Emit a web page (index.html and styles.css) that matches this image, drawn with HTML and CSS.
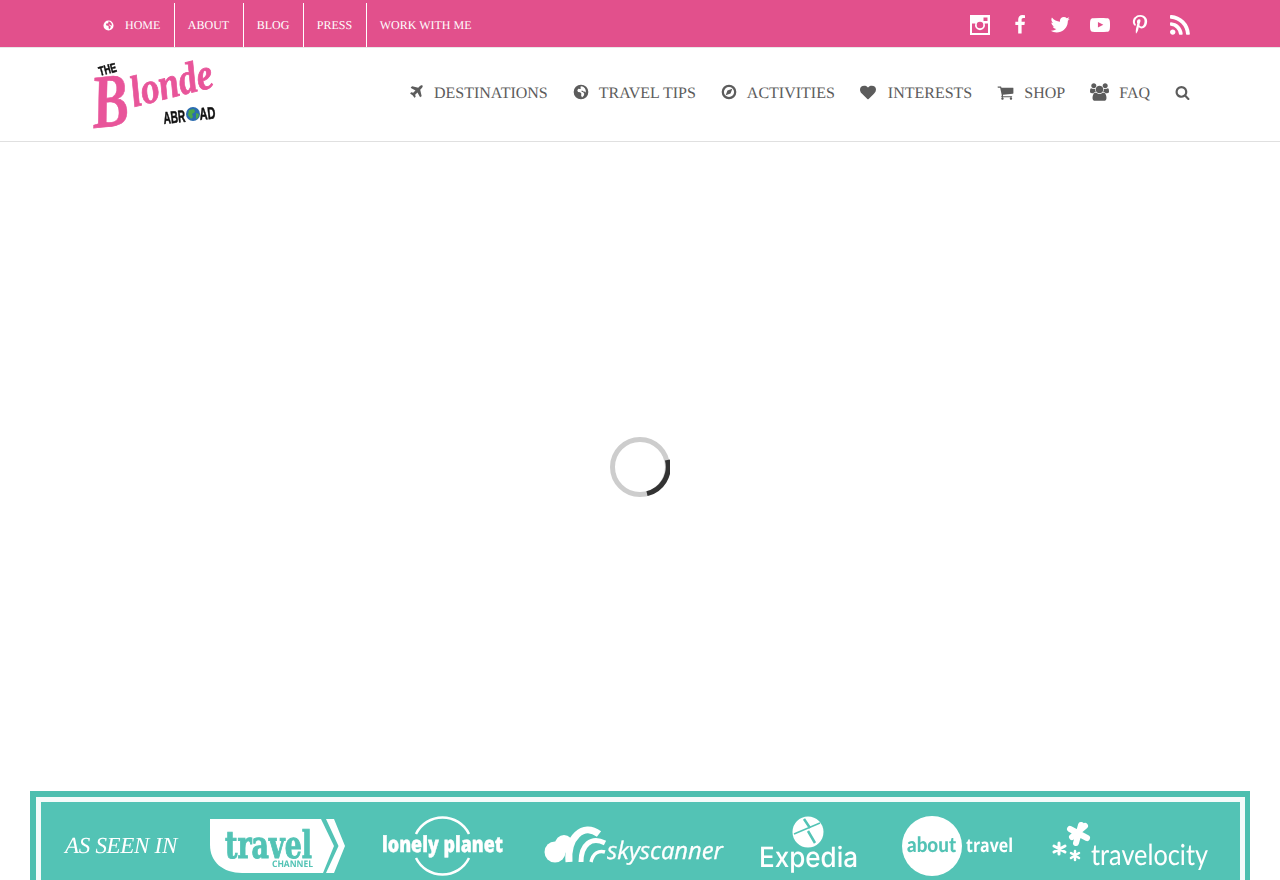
FILE: index.html
```html
<!DOCTYPE html>
<html lang="en">
<head>
<meta charset="utf-8">
<title>The Blonde Abroad</title>
<link rel="stylesheet" href="styles.css">
</head>
<body>
<svg class="sprite" width="0" height="0" aria-hidden="true">
  <symbol id="i-globe" viewBox="0 0 24 24"><path fill-rule="evenodd" d="M12 1a11 11 0 1 1 0 22 11 11 0 0 1 0-22zM13 3.200l-2.500 1.300 1.800 1.600-1.600 1.500-2.700-.4-1.500 2 1 2.700 3.200.6 1.800 1.700-.3 3.200 1.300 3 2.600-2.700.9-3-1.800-2.500-2.200-.4-.6-1.500 2.100-.3 1.900 1.500 1.700-.2.200 1.700 1-1.200c.3-4-2.500-7.200-6-8.400z"/></symbol>
  <symbol id="i-plane" viewBox="0 0 1408 1792"><path d="M1376 160q44 52 12 148t-108 172l-161 161 160 696q5 19-12 33l-128 96q-7 6-19 6-4 0-7-1-15-3-21-16l-279-508-259 259 53 194q5 17-8 31l-96 96q-9 9-23 9h-2q-15-2-24-13l-189-252-252-189q-11-7-13-23-1-13 9-25l96-97q9-9 23-9 6 0 8 1l194 53 259-259-508-279q-14-8-17-24-2-16 9-27l128-128q14-13 30-8l665 159 160-160q76-76 172-108t148 12z"/></symbol>
  <symbol id="i-compass" viewBox="0 0 24 24"><path fill-rule="evenodd" d="M12 1a11 11 0 1 1 0 22 11 11 0 0 1 0-22zm0 3.400a7.600 7.600 0 1 0 0 15.200 7.600 7.600 0 0 0 0-15.200zM17 7l-2.700 7.300L7 17l2.700-7.300z"/></symbol>
  <symbol id="i-heart" viewBox="0 0 1792 1792"><path d="M896 1664q-26 0-44-18l-624-602q-10-8-27.500-26t-55.500-65.500-68-97.500-53.500-121-23.500-138q0-220 127-344t351-124q62 0 126.500 21.500t120 58 95.500 68.500 76 68q36-36 76-68t95.500-68.500 120-58 126.500-21.500q224 0 351 124t127 344q0 221-229 450l-623 600q-18 18-44 18z"/></symbol>
  <symbol id="i-cart" viewBox="0 0 1792 1792"><path d="M704 1536q0 52-38 90t-90 38-90-38-38-90 38-90 90-38 90 38 38 90zm896 0q0 52-38 90t-90 38-90-38-38-90 38-90 90-38 90 38 38 90zm128-1088v512q0 24-16.500 42.500t-40.500 21.500l-1044 122q13 60 13 70 0 16-24 64h920q26 0 45 19t19 45-19 45-45 19h-1024q-26 0-45-19t-19-45q0-11 8-31.500t16-36 21.500-40 15.500-29.500l-177-823h-204q-26 0-45-19t-19-45 19-45 45-19h256q16 0 28.500 6.500t19.500 15.500 13 24.500 8 26 5.500 29.500 4.500 26h1201q26 0 45 19t19 45z"/></symbol>
  <symbol id="i-users" viewBox="0 0 1920 1792"><path d="M593 896q-162 5-265 128h-134q-82 0-138-40.500t-56-118.500q0-353 124-353 6 0 43.500 21t97.500 42.500 119 21.500q67 0 133-23-5 37-5 66 0 139 81 256zm1071 637q0 120-73 189.500t-194 69.500h-874q-121 0-194-69.500t-73-189.500q0-53 3.500-103.500t14-109 26.500-108.500 43-97.500 62-81 85.500-53.500 111.500-20q10 0 43 21.500t73 48 107 48 135 21.500 135-21.500 107-48 73-48 43-21.500q61 0 111.500 20t85.500 53.500 62 81 43 97.500 26.500 108.500 14 109 3.500 103.500zm-1024-1277q0 106-75 181t-181 75-181-75-75-181 75-181 181-75 181 75 75 181zm704 384q0 159-112.500 271.500t-271.500 112.500-271.500-112.500-112.500-271.500 112.500-271.500 271.500-112.500 271.500 112.500 112.500 271.500zm576 225q0 78-56 118.500t-138 40.500h-134q-103-123-265-128 81-117 81-256 0-29-5-66 66 23 133 23 59 0 119-21.500t97.500-42.500 43.500-21q124 0 124 353zm-128-609q0 106-75 181t-181 75-181-75-75-181 75-181 181-75 181 75 75 181z"/></symbol>
  <symbol id="i-search" viewBox="0 0 1792 1792"><path d="M1216 832q0-185-131.500-316.500t-316.500-131.500-316.500 131.500-131.500 316.500 131.500 316.500 316.500 131.500 316.500-131.500 131.500-316.500zm512 832q0 52-38 90t-90 38q-54 0-90-38l-343-342q-179 124-399 124-143 0-273.500-55.500t-225-150-150-225-55.500-273.500 55.500-273.500 150-225 225-150 273.500-55.500 273.500 55.500 225 150 150 225 55.500 273.500q0 220-124 399l343 343q37 37 37 90z"/></symbol>
</svg>

<header>
  <div class="topbar">
    <div class="container topbar-row">
      <nav class="topnav">
        <a class="topnav-item" href="#"><svg class="ico topnav-ico" width="11" height="11"><use href="#i-globe"/></svg>HOME</a>
        <a class="topnav-item" href="#">ABOUT</a>
        <a class="topnav-item" href="#">BLOG</a>
        <a class="topnav-item" href="#">PRESS</a>
        <a class="topnav-item topnav-last" href="#">WORK WITH ME</a>
      </nav>
      <div class="social">
        <a href="#" aria-label="Instagram"><svg class="ico" width="20" height="20" viewBox="0 0 20 20"><path fill-rule="evenodd" d="M0 0h20v20H0zM2 8.500V18h16V8.500h-3.300a5 5 0 1 1-9.400 0zM13.500 2.500v3.500H17.500V2.500zM10 6.700a3.300 3.300 0 1 0 0 6.600 3.300 3.300 0 0 0 0-6.600z"/></svg></a>
        <a href="#" aria-label="Facebook"><svg class="ico" width="20" height="20" viewBox="0 0 1792 1792"><path d="M1343 12v264h-157q-86 0-116 36t-30 108v189h293l-39 296h-254v759h-306v-759h-255v-296h255v-218q0-186 104-288.500t277-102.500q147 0 228 12z"/></svg></a>
        <a href="#" aria-label="Twitter"><svg class="ico" width="20" height="20" viewBox="60 100 1640 1640"><path d="M1684 408q-67 98-162 167 1 14 1 42 0 130-38 259.500t-115.500 248.500-184.500 210.500-258 146-323 54.500q-271 0-496-145 35 4 78 4 225 0 401-138-105-2-188-64.500t-114-159.500q33 5 61 5 43 0 85-11-112-23-185.500-111.500t-73.500-205.500v-4q68 38 146 41-66-44-105-115t-39-154q0-88 44-163 121 149 294.500 238.500t371.500 99.500q-8-38-8-74 0-134 94.500-228.500t228.500-94.500q140 0 236 102 109-21 205-78-37 115-142 178 91-10 189-52z"/></svg></a>
        <a href="#" aria-label="YouTube"><svg class="ico" width="20" height="20" viewBox="0 0 1792 1792"><path d="M711 1128l484-250-484-253v503zm185-862q168 0 324.500 4.500t229.500 9.500l73 4q1 0 17 1.500t23 3 23.500 4.500 28.500 8 28 13 31 19.500 29 26.500q6 6 15.500 18.500t29 58.500 26.500 101q8 64 12.500 136.500t5.500 113.500v176q1 145-18 290-7 55-25 99.500t-32 61.500l-14 17q-14 15-29 26.500t-31 19-28 12.500-28.500 8-24 4.500-23 3-16.500 1.500q-251 19-627 19-207-2-359.500-6.500t-200.500-7.500l-49-4-36-4q-36-5-54.500-10t-51-21-56.500-41q-6-6-15.500-18.500t-29-58.500-26.500-101q-8-64-12.500-136.500t-5.500-113.500v-176q-1-145 18-290 7-55 25-99.500t32-61.500l14-17q14-15 29-26.500t31-19.500 28-13 28.500-8 23.500-4.500 23-3 17-1.500q251-18 627-18z"/></svg></a>
        <a href="#" aria-label="Pinterest"><svg class="ico" width="20" height="20" viewBox="0 0 1792 1792"><path d="M256 597q0-108 37.500-203.500t103.500-166.500 152-123 185-78 202-26q158 0 294 66.500t221 193.500 85 287q0 96-19 188t-60 177-100 149.500-145 103-189 38.500q-68 0-135-32t-96-88q-10 39-28 112.500t-23.500 95-20.500 71-26 71-32 62.500-46 77.500-62 86.500l-14 5-9-10q-15-157-15-188 0-92 21.500-206.500t66.500-287.500 52-203q-32-65-32-169 0-83 52-156t132-73q61 0 95 40.500t34 102.500q0 66-44 191t-44 187q0 63 45 104.500t109 41.500q55 0 102-25t78.500-68 56-95 38-110.500 20-111 6.500-99.500q0-173-109.500-269.500t-285.500-96.500q-200 0-334 129.500t-134 328.500q0 44 12.500 85t27 65 27 45.500 12.500 30.500q0 28-15 73t-37 45q-2 0-17-3-51-15-90.500-56t-61-94.500-32.500-108-11-106.500z"/></svg></a>
        <a href="#" aria-label="RSS"><svg class="ico" width="20" height="20" viewBox="190 130 1420 1420"><path d="M576 1344q0 80-56 136t-136 56-136-56-56-136 56-136 136-56 136 56 56 136zm512 123q2 28-17 48-18 21-47 21h-135q-25 0-43-16.500t-20-41.500q-22-229-184.500-391.500t-391.500-184.500q-25-2-41.500-20t-16.500-43v-135q0-29 21-47 17-17 43-17h5q160 13 306 80.500t259 181.500q114 113 181.500 259t80.500 306zm512 2q2 27-18 47-18 20-46 20h-143q-26 0-44.500-17.500t-19.500-42.500q-12-215-101-408.500t-231.500-336-336-231.500-408.500-102q-25-1-42.500-19.500t-17.500-43.500v-143q0-28 20-46 18-18 44-18h3q262 13 501.500 120t425.500 294q187 186 294 425.500t120 501.500z"/></svg></a>
      </div>
    </div>
  </div>
  <div class="mainbar">
    <div class="container mainbar-row">
      <a class="logo" href="#" aria-label="The Blonde Abroad">
        <svg width="130" height="74" viewBox="90 58 130 74">
          <text class="logo-the" transform="translate(100 76) rotate(-15)" textLength="18" lengthAdjust="spacingAndGlyphs">THE</text>
          <text class="logo-b" transform="translate(94 128) rotate(-6)" textLength="37" lengthAdjust="spacingAndGlyphs">B</text>
          <text class="logo-script" transform="translate(134 107) rotate(-14)" textLength="84" lengthAdjust="spacingAndGlyphs">londe</text>
          <text class="logo-abroad" transform="translate(164 124) rotate(-6)" textLength="22" lengthAdjust="spacingAndGlyphs">ABR</text>
          <circle cx="193" cy="114" r="7" fill="#2b6cb0"/>
          <path d="M189 110l5-1 1 3-3 2 1 3-2 2-3-4zM196 113l3 1-1 4-2 1z" fill="#4aa84a"/>
          <text class="logo-abroad" transform="translate(200 120) rotate(-6)" textLength="16" lengthAdjust="spacingAndGlyphs">AD</text>
        </svg>
      </a>
      <nav class="mainnav">
        <a href="#"><svg class="ico" width="15" height="16"><use href="#i-plane"/></svg>DESTINATIONS</a>
        <a href="#"><svg class="ico" width="16" height="16"><use href="#i-globe"/></svg>TRAVEL TIPS</a>
        <a href="#"><svg class="ico" width="16" height="16"><use href="#i-compass"/></svg>ACTIVITIES</a>
        <a href="#"><svg class="ico ico-heart" width="16" height="17"><use href="#i-heart"/></svg>INTERESTS</a>
        <a href="#"><svg class="ico" width="17" height="17"><use href="#i-cart"/></svg>SHOP</a>
        <a href="#"><svg class="ico" width="19" height="18"><use href="#i-users"/></svg>FAQ</a>
        <a href="#" aria-label="Search"><svg class="ico" width="15" height="15"><use href="#i-search"/></svg></a>
      </nav>
    </div>
  </div>
</header>

<main class="content">
  <svg class="spinner" width="60" height="60" viewBox="0 0 60 60" role="img" aria-label="Loading">
    <circle class="spinner-track" cx="30" cy="30" r="27.500"/>
    <path class="spinner-arc" d="M57.400 23A27.500 27.500 0 0 1 37 56.600"/>
  </svg>
</main>

<section class="press">
  <div class="press-frame">
    <div class="press-inner">
      <div class="press-title">AS SEEN IN</div>

      <svg class="plogo" width="173" height="78" viewBox="205 802 173 78" role="img" aria-label="Travel Channel">
        <path class="w" d="M211 819H322L335 846 324 873H243C224 873 211 862 211 845Z"/>
        <path class="w" d="M327 819H335L346 846 335 873H327L339.500 846Z"/>
        <text class="t-travel" x="226" y="858" textLength="87" lengthAdjust="spacingAndGlyphs">travel</text>
        <text class="t-channel" x="273" y="867" textLength="41" lengthAdjust="spacingAndGlyphs">CHANNEL</text>
      </svg>

      <svg class="plogo" width="162" height="78" viewBox="378 802 162 78" role="img" aria-label="Lonely Planet">
        <path class="ring" d="M417 834A29.500 29.500 0 0 1 470 834M417 858A29.500 29.500 0 0 0 470 858"/>
        <text class="t-lonely" x="383" y="852" textLength="121" lengthAdjust="spacingAndGlyphs">lonely planet</text>
      </svg>

      <svg class="plogo" width="215" height="78" viewBox="540 802 215 78" role="img" aria-label="Skyscanner">
        <circle class="w" cx="556" cy="852" r="10.500"/>
        <circle class="w" cx="565" cy="844" r="9"/>
        <path class="band b1" d="M570 862C568 838 584 822 600 834"/>
        <path class="band b2" d="M582 862C582 845 592 836 606 843"/>
        <path class="band b3" d="M592 862C594 853 600 850 606 852"/>
        <text class="t-sky" x="608" y="859" textLength="116" lengthAdjust="spacingAndGlyphs">skyscanner</text>
      </svg>

      <svg class="plogo" width="142" height="78" viewBox="755 802 142 78" role="img" aria-label="Expedia">
        <circle class="w" cx="809" cy="832" r="15.500"/>
        <path class="plane-line" d="M795 834L821 823"/>
        <path class="plane-wing" d="M805 819L811 828M809 831L816 843"/>
        <text class="t-expedia" x="760" y="867" textLength="99" lengthAdjust="spacingAndGlyphs">Expedia</text>
      </svg>

      <svg class="plogo" width="151" height="78" viewBox="897 802 151 78" role="img" aria-label="About Travel">
        <circle class="w" cx="933" cy="846" r="30"/>
        <text class="t-about" x="908" y="852" textLength="49" lengthAdjust="spacingAndGlyphs">about</text>
        <text class="t-atravel" x="967" y="852" textLength="47" lengthAdjust="spacingAndGlyphs">travel</text>
      </svg>

      <svg class="plogo" width="170" height="78" viewBox="1048 802 170 78" role="img" aria-label="Travelocity">
        <g class="star-l"><path d="M1082 825L1077 843M1071 829L1088 838M1086 826L1073 837"/></g>
        <g class="star-s"><path d="M1060 843V854M1055 846L1066 852M1055 852L1066 846"/></g>
        <g class="star-x"><path d="M1076 851V860M1072 853L1080 858M1072 858L1080 853"/></g>
        <text class="t-velocity" x="1092" y="865" textLength="117" lengthAdjust="spacingAndGlyphs">travelocity</text>
      </svg>
    </div>
  </div>
</section>
</body>
</html>
```

FILE: styles.css
```css
* { box-sizing: border-box; }
html, body { margin: 0; padding: 0; }
body {
  height: 880px;
  overflow: hidden;
  background: #fff;
  font-family: "Liberation Serif", "Times New Roman", serif;
  text-rendering: geometricPrecision;
}
a { color: inherit; text-decoration: none; }
.sprite { position: absolute; }
.ico { fill: currentColor; display: block; flex: none; }
.container { width: 1100px; margin: 0 auto; }

.topbar {
  height: 48px;
  background: #e2508c;
  border-bottom: 1px solid #e8e8e8;
  color: #fff;
}
.topbar-row { display: flex; justify-content: space-between; height: 47px; }
.topnav { display: flex; padding-top: 3px; font-size: 12px; }
.topnav-item {
  display: flex;
  align-items: center;
  padding: 0 13.5px 0 13px;
  border-right: 1px solid #fff;
  height: 44px;
}
.topnav-last { border-right: 0; }
.topnav-ico { margin-right: 11px; }
.social { display: flex; gap: 20px; align-items: center; padding-top: 3px; }

.mainbar {
  height: 94px;
  border-bottom: 1px solid #e0e0e0;
}
.mainbar-row { display: flex; justify-content: space-between; align-items: center; height: 93px; }
.logo { display: block; height: 74px; }
.logo svg { display: block; overflow: visible; filter: blur(.35px); }
.logo-the { font: 900 13px "Liberation Sans", sans-serif; fill: #111; stroke: #111; stroke-width: .5; }
.logo-b { font: italic 700 76px "Liberation Serif", serif; fill: #e8559a; stroke: #e8559a; stroke-width: .6; }
.logo-script { font: italic 700 44px "Liberation Serif", serif; fill: #e8559a; stroke: #e8559a; stroke-width: .8; }
.logo-abroad { font: 900 17px "Liberation Sans", sans-serif; fill: #111; stroke: #111; stroke-width: .5; }

.mainnav {
  display: flex;
  gap: 25px;
  align-items: center;
  padding-bottom: 2px;
  font-size: 16px;
  color: #5c5c5c;
}
.mainnav a { display: flex; align-items: center; gap: 10px; }
.mainnav .ico { margin-bottom: 3px; }
.mainnav .ico-heart { margin-right: 2px; }

.content {
  height: 649px;
  display: flex;
  align-items: center;
  justify-content: center;
}
.spinner { display: block; }
.spinner-track { fill: none; stroke: #cdcdcd; stroke-width: 5; }
.spinner-arc { fill: none; stroke: #333; stroke-width: 5; }

.press { padding: 0 30px; }
.press-frame {
  background: #4dbfaf;
  padding: 6px 5px 0 6px;
}
.press-inner {
  background: #53c3b5;
  border: 5px solid #f5fbfa;
  border-bottom: 0;
  display: flex;
  height: 110px;
  filter: blur(.4px);
}
.press-title {
  width: 163px;
  flex: none;
  padding: 30px 0 0 24px;
  font: italic 23px/28px "Liberation Serif", serif;
  letter-spacing: -.3px;
  color: #fff;
  white-space: nowrap;
}
.plogo { display: block; flex: none; overflow: visible; }
.w { fill: #fff; }
.ring { fill: none; stroke: #fff; stroke-width: 2.500; }
.band { fill: none; stroke: #fff; }
.b1 { stroke-width: 7; }
.b2 { stroke-width: 5; }
.b3 { stroke-width: 3.500; }
.plane-line { fill: none; stroke: #53c3b5; stroke-width: 1.500; }
.plane-wing { fill: none; stroke: #53c3b5; stroke-width: 2.500; }
.t-travel { font: 700 38px "DejaVu Serif", serif; fill: #53c3b5; stroke: #53c3b5; stroke-width: 1; }
.t-channel { font: 700 9px "Open Sans", sans-serif; fill: #53c3b5; }
.t-lonely { font: 800 22px "Open Sans", sans-serif; fill: #fff; stroke: #fff; stroke-width: .4; }
.t-sky { font: italic 400 24px "Open Sans", sans-serif; fill: #fff; stroke: #fff; stroke-width: .3; }
.t-expedia { font: 500 28px Inter, sans-serif; fill: #fff; }
.t-about { font: 900 21px Lato, sans-serif; fill: #53c3b5; }
.t-atravel { font: 700 19px "Open Sans", sans-serif; fill: #fff; }
.t-velocity { font: 400 29px Lato, sans-serif; fill: #fff; }
.star-l path, .star-s path, .star-x path { fill: none; stroke: #fff; stroke-linecap: round; }
.star-l path { stroke-width: 6; }
.star-s path { stroke-width: 3; }
.star-x path { stroke-width: 2.500; }
```
